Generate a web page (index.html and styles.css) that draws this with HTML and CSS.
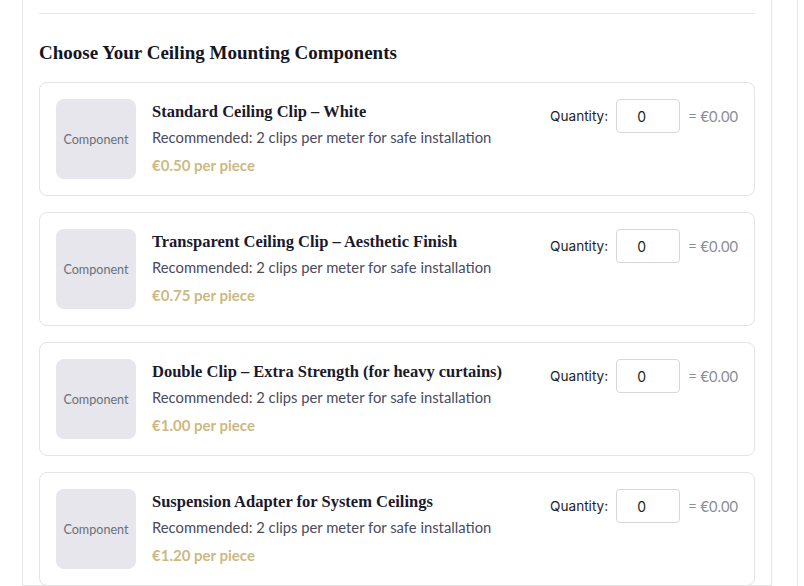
FILE: index.html
```html
<!DOCTYPE html>
<html lang="en">
<head>
<meta charset="utf-8">
<title>Ceiling Mounting Components</title>
<link rel="stylesheet" href="styles.css">
</head>
<body>
<div class="layout">
  <main class="panel">
    <hr class="divider">
    <h2 class="section-title">Choose Your Ceiling Mounting Components</h2>
    <div class="list">
      <div class="card">
        <div class="thumb">Component</div>
        <div class="info">
          <h3 class="name">Standard Ceiling Clip – White</h3>
          <p class="desc">Recommended: 2 clips per meter for safe installation</p>
          <p class="price">€0.50 per piece</p>
        </div>
        <div class="qty">
          <label class="qty-label">Quantity:</label>
          <input class="qty-input" type="number" value="0">
          <span class="qty-total">= €0.00</span>
        </div>
      </div>
      <div class="card">
        <div class="thumb">Component</div>
        <div class="info">
          <h3 class="name">Transparent Ceiling Clip – Aesthetic Finish</h3>
          <p class="desc">Recommended: 2 clips per meter for safe installation</p>
          <p class="price">€0.75 per piece</p>
        </div>
        <div class="qty">
          <label class="qty-label">Quantity:</label>
          <input class="qty-input" type="number" value="0">
          <span class="qty-total">= €0.00</span>
        </div>
      </div>
      <div class="card">
        <div class="thumb">Component</div>
        <div class="info">
          <h3 class="name">Double Clip – Extra Strength (for heavy curtains)</h3>
          <p class="desc">Recommended: 2 clips per meter for safe installation</p>
          <p class="price">€1.00 per piece</p>
        </div>
        <div class="qty">
          <label class="qty-label">Quantity:</label>
          <input class="qty-input" type="number" value="0">
          <span class="qty-total">= €0.00</span>
        </div>
      </div>
      <div class="card">
        <div class="thumb">Component</div>
        <div class="info">
          <h3 class="name">Suspension Adapter for System Ceilings</h3>
          <p class="desc">Recommended: 2 clips per meter for safe installation</p>
          <p class="price">€1.20 per piece</p>
        </div>
        <div class="qty">
          <label class="qty-label">Quantity:</label>
          <input class="qty-input" type="number" value="0">
          <span class="qty-total">= €0.00</span>
        </div>
      </div>
    </div>
  </main>
  <aside class="side"></aside>
</div>
</body>
</html>
```

FILE: styles.css
```css
html, body {
  margin: 0;
  padding: 0;
  background: #ffffff;
  height: 100%;
  overflow: hidden;
}
body {
  font-family: "Lato", "Liberation Sans", sans-serif;
  color: #1c1c2b;
}
.layout {
  display: flex;
  gap: 25px;
  padding-left: 22px;
  height: 100%;
}
.panel {
  width: 750px;
  box-sizing: border-box;
  border: 1px solid #e6e6ea;
  border-top: none;
  padding: 13px 16px 20px;
  flex-shrink: 0;
}
.side {
  flex: 1;
  border-left: 1px solid #e6e6ea;
}
.divider {
  border: none;
  border-top: 1px solid #e6e6ea;
  margin: 0;
}
.section-title {
  font-family: "Liberation Serif", "DejaVu Serif", serif;
  font-weight: 700;
  font-size: 19px;
  line-height: 24px;
  margin: 27px 0 17px;
  color: #151522;
}
.list {
  display: flex;
  flex-direction: column;
  gap: 16px;
}
.card {
  display: flex;
  align-items: flex-start;
  gap: 16px;
  border: 1px solid #e3e3e8;
  border-radius: 8px;
  padding: 16px;
}
.thumb {
  width: 80px;
  height: 80px;
  flex-shrink: 0;
  background: #e6e6ec;
  border-radius: 8px;
  display: flex;
  align-items: center;
  justify-content: center;
  font-size: 12.6px;
  color: #6c6e7c;
}
.info {
  flex: 1;
  min-width: 0;
}
.name {
  font-family: "Liberation Serif", "DejaVu Serif", serif;
  font-weight: 700;
  font-size: 16.5px;
  line-height: 25px;
  margin: 0;
  color: #1a1a2c;
}
.desc {
  font-size: 14.8px;
  line-height: 20px;
  margin: 3px 0 8px;
  color: #4a4b5c;
}
.price {
  font-size: 15px;
  line-height: 20px;
  margin: 0;
  font-weight: 700;
  color: #cdb981;
}
.qty {
  display: flex;
  align-items: center;
  gap: 8px;
}
.qty-label {
  font-family: "Inter", "Liberation Sans", sans-serif;
  font-size: 13.6px;
  color: #1e1e26;
}
.qty-input {
  width: 64px;
  height: 34px;
  box-sizing: border-box;
  border: 1px solid #d6d8e0;
  border-radius: 4px;
  padding: 0 8px 0 20px;
  font-family: "Inter", "Liberation Sans", sans-serif;
  font-size: 14px;
  color: #1e1e26;
  background: #fff;
  -moz-appearance: textfield;
}
.qty-input::-webkit-outer-spin-button,
.qty-input::-webkit-inner-spin-button {
  -webkit-appearance: none;
  margin: 0;
}
.qty-total {
  font-size: 14.7px;
  color: #8a8d9a;
}
```
